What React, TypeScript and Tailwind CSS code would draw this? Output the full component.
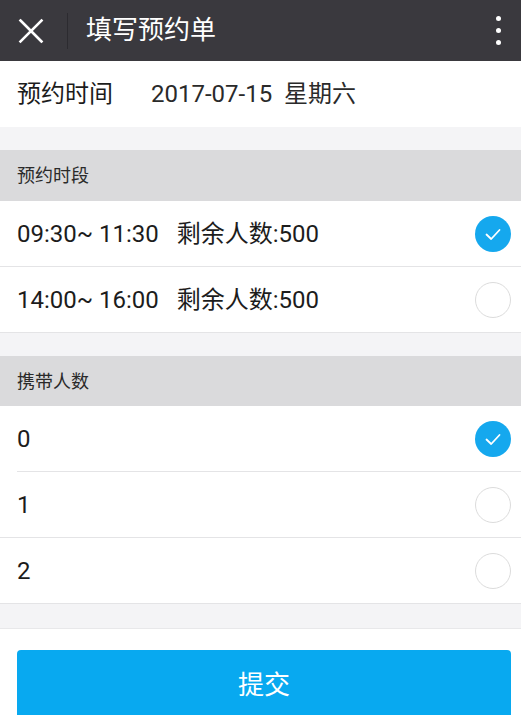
import React from "react";

const font = { fontFamily: '"Roboto", "Noto Sans CJK SC", sans-serif' };

function Radio({ checked }: { checked: boolean }) {
  if (checked) {
    return (
      <div className="w-[36px] h-[36px] rounded-full bg-[#15a8ee] flex items-center justify-center">
        <svg width="20" height="20" viewBox="0 0 20 20" fill="none">
          <path d="M3.5 10.5 L8.2 15 L16.5 6" stroke="white" strokeWidth="1.8" strokeLinecap="round" strokeLinejoin="round" />
        </svg>
      </div>
    );
  }
  return <div className="w-[36px] h-[36px] rounded-full border border-[#dcdcdc] bg-white" />;
}

function Row({ children, checked, border }: { children: React.ReactNode; checked: boolean; border: "full" | "inset" | "none" }) {
  return (
    <div className="bg-white relative">
      <div className="h-[65px] flex items-center justify-between pl-[17px] pr-[10px] text-[24px] text-[#1c1c1c]">
        <div className="whitespace-pre">{children}</div>
        <Radio checked={checked} />
      </div>
      {border === "full" && <div className="h-px bg-[#e4e4e6]" />}
      {border === "inset" && <div className="h-px bg-[#e4e4e6] ml-[17px]" />}
    </div>
  );
}

export default function App() {
  return (
    <div className="w-[521px] h-[715px] overflow-hidden bg-[#f4f4f6]" style={font}>
      <div className="h-[61px] bg-[#3a393e] flex items-center relative">
        <div className="w-[60px] flex items-center justify-center pl-[1px]">
          <svg width="26" height="26" viewBox="0 0 26 26">
            <path d="M2.5 2.5 L23.5 23.5 M23.5 2.5 L2.5 23.5" stroke="white" strokeWidth="2.6" strokeLinecap="square" />
          </svg>
        </div>
        <div className="w-px h-[36px] bg-[#2c2b30] ml-[7px]" />
        <div className="ml-[18px] text-white text-[26px]">填写预约单</div>
        <div className="ml-auto mr-[20px] flex flex-col gap-[7px]">
          <div className="w-[5px] h-[5px] rounded-full bg-white" />
          <div className="w-[5px] h-[5px] rounded-full bg-white" />
          <div className="w-[5px] h-[5px] rounded-full bg-white" />
        </div>
      </div>

      <div className="h-[66px] bg-white flex items-center pl-[17px] text-[24px] text-[#1c1c1c]">
        <span>预约时间</span>
        <span className="ml-[38px] text-[#2a2a2a]">2017-07-15&nbsp;&nbsp;星期六</span>
      </div>

      <div className="h-[23px]" />

      <div className="h-[51px] bg-[#dadadc] flex items-center pl-[17px] text-[18px] text-[#2a2a2a]">预约时段</div>
      <Row checked border="full">{"09:30~ 11:30   剩余人数:500"}</Row>
      <Row checked={false} border="full">{"14:00~ 16:00   剩余人数:500"}</Row>

      <div className="h-[23px]" />

      <div className="h-[50px] bg-[#dadadc] flex items-center pl-[17px] text-[18px] text-[#2a2a2a]">携带人数</div>
      <Row checked border="inset">0</Row>
      <Row checked={false} border="full">1</Row>
      <Row checked={false} border="full">2</Row>

      <div className="h-[24px]" />
      <div className="h-px bg-[#e8e8ea]" />
      <div className="bg-white pt-[21px] px-[17px] pr-[10px] h-[200px]">
        <div className="h-[80px] rounded-[4px] bg-[#08a9f0] flex justify-center pt-[16px] text-white text-[26px]">提交</div>
      </div>
    </div>
  );
}
